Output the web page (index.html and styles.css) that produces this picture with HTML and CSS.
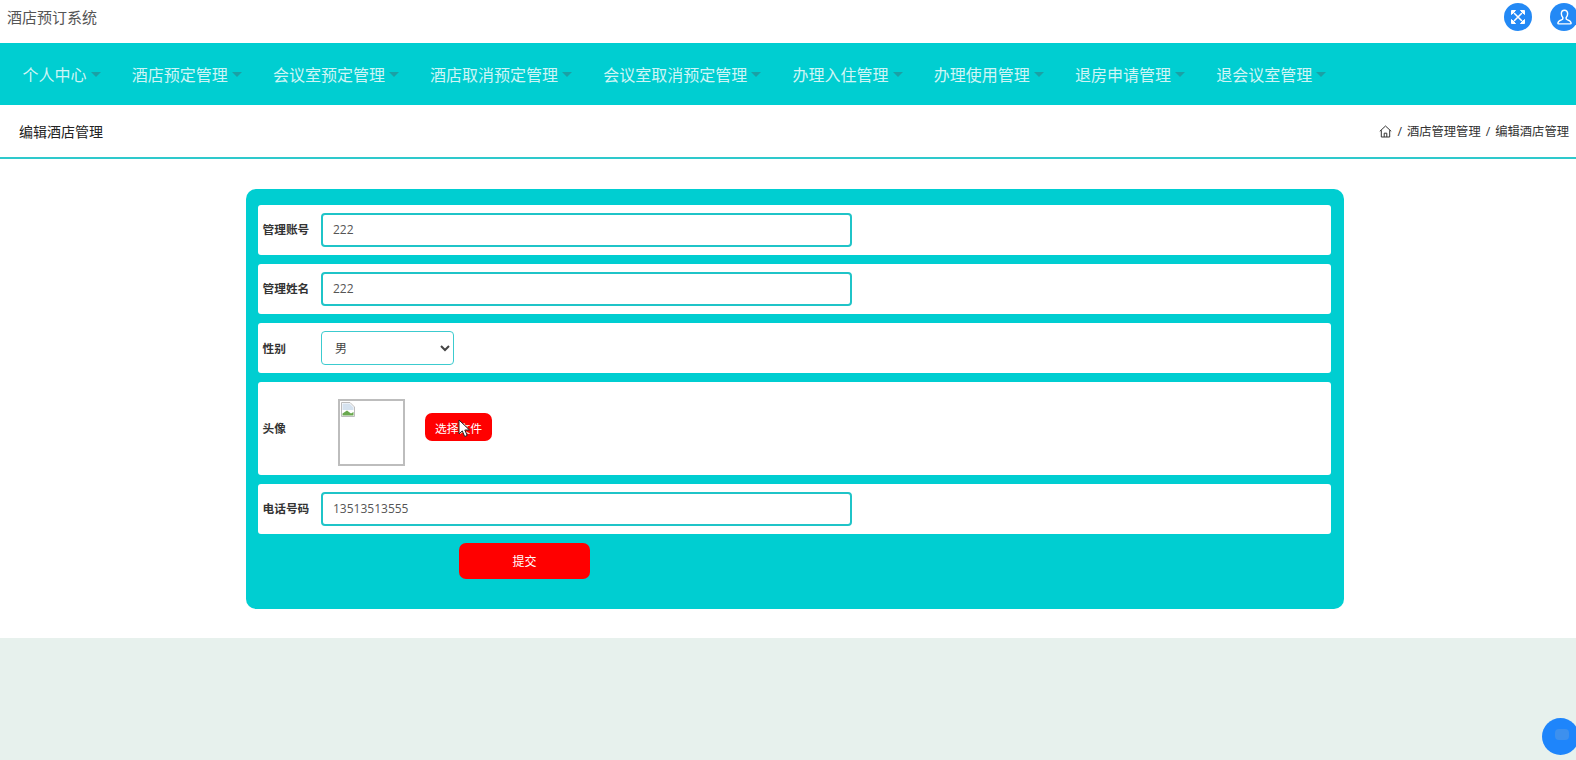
FILE: index.html
```html
<!DOCTYPE html>
<html lang="zh-CN">
<head>
    <meta charset="UTF-8">
    <title>编辑酒店管理</title>
    <link rel="stylesheet" href="styles.css">
</head>
<body>
    <header class="topbar">
        <div class="brand">酒店预订系统</div>
        <div class="top-icons">
            <span class="round-btn">
                <svg width="16" height="16" viewBox="0 0 16 16" fill="#fff" stroke="#fff" stroke-width="1.6">
                    <path d="M4 4 12 12M12 4 4 12" fill="none"/>
                    <path d="M1.500 1.500H5.500L1.500 5.500ZM14.500 1.500V5.500L10.500 1.500ZM14.500 14.500H10.500L14.500 10.500ZM1.500 14.500V10.500L5.500 14.500Z" stroke-width="1" stroke-linejoin="round"/>
                </svg>
            </span>
            <span class="round-btn">
                <svg width="17" height="17" viewBox="0 0 20 20" fill="none" stroke="#fff" stroke-width="1.7">
                    <path d="M10 1.500c-2.300 0-3.700 1.700-3.700 4.200 0 1.800.8 3.300 1.700 4.200v1.800c0 1-5.800 1.500-5.800 5 0 .6.300.8 1 .8h13.600c.7 0 1-.2 1-.8 0-3.500-5.800-4-5.800-5V9.900c.9-.9 1.700-2.400 1.700-4.200 0-2.500-1.400-4.200-3.700-4.200z"/>
                </svg>
            </span>
        </div>
    </header>

    <nav class="mainnav">
        <a class="nav-item">个人中心</a>
        <a class="nav-item">酒店预定管理</a>
        <a class="nav-item">会议室预定管理</a>
        <a class="nav-item">酒店取消预定管理</a>
        <a class="nav-item">会议室取消预定管理</a>
        <a class="nav-item">办理入住管理</a>
        <a class="nav-item">办理使用管理</a>
        <a class="nav-item">退房申请管理</a>
        <a class="nav-item">退会议室管理</a>
    </nav>

    <div class="crumbbar">
        <div class="crumb-title">编辑酒店管理</div>
        <div class="crumbs">
            <svg width="13" height="13" viewBox="0 0 13 13" fill="none" stroke="#333" stroke-width="1">
                <path d="M.8 6.300 6.500 1l5.700 5.300M2.300 5.200V12h8.400V5.200M5.200 12V8.200h2.600V12"/>
            </svg>
            <span>/</span>
            <span>酒店管理管理</span>
            <span>/</span>
            <span>编辑酒店管理</span>
        </div>
    </div>

    <main class="content">
        <form class="panel">
            <div class="row">
                <label class="row-label">管理账号</label>
                <input class="text-input" type="text" value="222">
            </div>
            <div class="row">
                <label class="row-label">管理姓名</label>
                <input class="text-input" type="text" value="222">
            </div>
            <div class="row">
                <label class="row-label">性别</label>
                <select class="select-input">
                    <option>男</option>
                    <option>女</option>
                </select>
            </div>
            <div class="row row-avatar">
                <label class="row-label">头像</label>
                <div class="avatar">
                    <svg width="14" height="15" viewBox="0 0 14 15">
                        <path d="M.5.500H9L13.500 5V14.500H.5Z" fill="#fff" stroke="#bdbdbd"/>
                        <path d="M1.500 1.500H8.500L12.500 5.500V8H1.500Z" fill="#d5e2ef"/>
                        <path d="M1.500 13.500V11.500L6 8.500 10 11.500 12.500 10V13.500Z" fill="#6aa84f"/>
                    </svg>
                </div>
                <button class="file-btn" type="button">选择文件</button>
                <svg class="cursor" width="13" height="19" viewBox="0 0 13 19">
                    <path d="M1 1V15L4.300 11.900 6.700 17.500 9.200 16.400 6.800 11H11.500Z" fill="#fff" stroke="#222" stroke-width="1"/>
                </svg>
            </div>
            <div class="row">
                <label class="row-label">电话号码</label>
                <input class="text-input" type="text" value="13513513555">
            </div>
            <div class="actions">
                <button class="submit-btn" type="button">提交</button>
            </div>
        </form>
    </main>

    <div class="float-btn"><span class="float-mark"></span></div>
</body>
</html>
```

FILE: styles.css
```css
body {
    margin: 0;
    min-height: 760px;
    background: #e7f1ed;
    font-family: "Open Sans", "Noto Sans CJK SC", sans-serif;
    overflow: hidden;
}

.topbar {
    height: 43px;
    background: #fff;
    display: flex;
    justify-content: space-between;
    padding-left: 7px;
}

.brand {
    font-size: 15px;
    line-height: 35px;
    color: #555;
}

.top-icons {
    display: flex;
    gap: 18px;
    padding-top: 3px;
    margin-right: -2px;
}

.round-btn {
    width: 28px;
    height: 28px;
    border-radius: 50%;
    background: #2389f5;
    display: flex;
    align-items: center;
    justify-content: center;
}

.mainnav {
    height: 62px;
    background: #00ced1;
    display: flex;
    align-items: center;
    padding-left: 22.500px;
    gap: 31.200px;
}

.nav-item {
    font-size: 16px;
    color: rgba(255, 255, 255, 0.82);
    display: flex;
    align-items: center;
    white-space: nowrap;
}

.nav-item::after {
    content: "";
    margin-left: 4px;
    border-top: 5px solid #1ba0a5;
    border-left: 5px solid transparent;
    border-right: 5px solid transparent;
}

.crumbbar {
    height: 52px;
    background: #fff;
    border-bottom: 2px solid #2ec9cc;
    display: flex;
    justify-content: space-between;
    align-items: center;
    padding: 0 7px 0 19px;
}

.crumb-title {
    font-size: 14px;
    color: #222;
}

.crumbs {
    display: flex;
    align-items: center;
    gap: 5px;
    font-size: 12.300px;
    color: #333;
}

.content {
    background: #fff;
    padding: 29.500px 0 29px 246px;
}

.panel {
    width: 1074px;
    height: 388.500px;
    padding: 16px 12px;
    background: #00ced1;
    border-radius: 10px;
    display: flex;
    flex-direction: column;
    gap: 8.600px;
}

.row {
    height: 50.600px;
    margin-right: 1px;
    background: #fff;
    border-radius: 3px;
    display: flex;
    align-items: center;
    position: relative;
}

.row-avatar {
    height: 93px;
}

.row-label {
    width: 63px;
    padding-left: 4.500px;
    margin-bottom: 2px;
    box-sizing: border-box;
    font-size: 11.700px;
    font-weight: 700;
    color: #333;
    flex: none;
}

.row-avatar .row-label {
    margin-bottom: 3px;
}

.text-input {
    width: 531px;
    height: 34px;
    box-sizing: border-box;
    border: 2px solid #1fc4c8;
    border-radius: 4px;
    padding: 0 10px;
    font-family: inherit;
    font-size: 12px;
    color: #555;
    background: #fff;
    outline: none;
}

.select-input {
    width: 133px;
    height: 34px;
    box-sizing: border-box;
    border: 1px solid #3ccbcf;
    border-radius: 4px;
    padding: 0 9px;
    font-family: inherit;
    font-size: 12px;
    color: #444;
    background: #fff;
}

.avatar {
    width: 67px;
    height: 67px;
    box-sizing: border-box;
    margin: 8px 0 0 17px;
    padding: 1px;
    border: 2px solid #bdbdbd;
    display: flex;
    align-items: flex-start;
}

.file-btn {
    width: 67px;
    height: 28px;
    margin: 0 0 3px 20px;
    border: none;
    border-radius: 7px;
    padding: 0;
    background: #f00;
    color: #fff;
    font-family: inherit;
    font-size: 11.800px;
}

.cursor {
    position: absolute;
    left: 200px;
    top: 37px;
}

.actions {
    padding-left: 201px;
}

.submit-btn {
    width: 131px;
    height: 36px;
    border: none;
    border-radius: 7px;
    background: #f00;
    color: #fff;
    font-family: inherit;
    font-size: 12px;
}

.float-btn {
    position: fixed;
    left: 1542px;
    top: 718px;
    width: 37px;
    height: 37px;
    border-radius: 50%;
    background: #1e85fb;
}

.float-mark {
    position: absolute;
    left: 13px;
    top: 11px;
    width: 14px;
    height: 11px;
    border-radius: 4px;
    background: #3d90ee;
}
```
